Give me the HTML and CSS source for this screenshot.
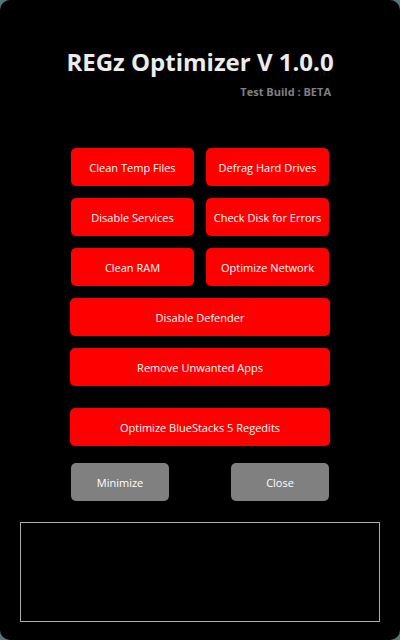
FILE: index.html
```html
<!DOCTYPE html>
<html lang="en">
<head>
<meta charset="utf-8">
<meta name="viewport" content="width=device-width, initial-scale=1">
<title>REGz Optimizer</title>
<link rel="stylesheet" href="styles.css">
</head>
<body>
<main class="window">
  <header class="header">
    <h1 class="title">REGz Optimizer V 1.0.0</h1>
    <p class="build">Test Build : BETA</p>
  </header>
  <div class="pairs">
    <button class="btn" type="button">Clean Temp Files</button>
    <button class="btn" type="button">Defrag Hard Drives</button>
    <button class="btn" type="button">Disable Services</button>
    <button class="btn" type="button">Check Disk for Errors</button>
    <button class="btn" type="button">Clean RAM</button>
    <button class="btn" type="button">Optimize Network</button>
  </div>
  <div class="wide">
    <button class="btn" type="button">Disable Defender</button>
    <button class="btn" type="button">Remove Unwanted Apps</button>
  </div>
  <div class="wide wide-last">
    <button class="btn" type="button">Optimize BlueStacks 5 Regedits</button>
  </div>
  <div class="window-actions">
    <button class="btn btn-grey" type="button">Minimize</button>
    <button class="btn btn-grey" type="button">Close</button>
  </div>
  <textarea class="log" aria-label="Log output" readonly></textarea>
</main>
</body>
</html>
```
FILE: styles.css
```css
* { box-sizing: border-box; }
body {
  margin: 0;
  background: #5b7478;
  font-family: "Open Sans", "Noto Sans", sans-serif;
}
.window {
  display: flex;
  flex-direction: column;
  min-height: 100vh;
  padding: 44px 20px 18px;
  border-radius: 10px;
  background: #000;
}
.header { margin: 0 45px 48px; }
.title {
  margin: 0;
  color: #ececec;
  font-size: 24px;
  line-height: 36px;
  font-weight: 700;
  text-align: center;
  white-space: nowrap;
}
.build {
  margin: 4px 4px 0 0;
  color: #808080;
  font-size: 11px;
  line-height: 16px;
  font-weight: 700;
  text-align: right;
}
.btn {
  height: 38px;
  padding: 1px 0 0;
  border: 0;
  border-radius: 5px;
  background: #f00;
  color: #fff;
  font: 11px/16px "Open Sans", "Noto Sans", sans-serif;
  white-space: nowrap;
}
.btn-grey { width: 98px; background: #808080; }
.pairs {
  display: grid;
  grid-template-columns: 1fr 1fr;
  gap: 12px;
  margin: 0 51px;
}
.wide { display: grid; gap: 12px; margin: 12px 50px 0; }
.wide-last { margin-top: 22px; }
.window-actions {
  display: flex;
  justify-content: space-between;
  margin: 17px 51px 21px;
}
.log {
  flex: 1;
  min-height: 100px;
  border: 1px solid #abadb3;
  background: #000;
  color: #fff;
  resize: none;
}
```
